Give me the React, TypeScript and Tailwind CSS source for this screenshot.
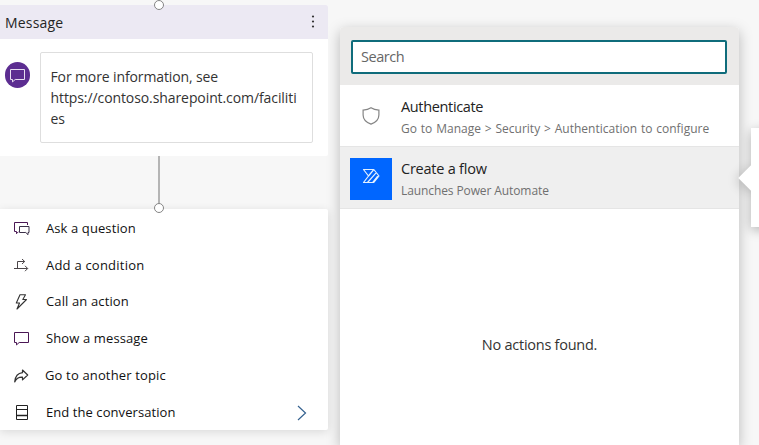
import React from "react";

const AskIcon = () => (
  <svg width="16" height="14" viewBox="0 0 16 14" fill="none" strokeWidth="1">
    <path stroke="#4a1754" d="M13.500 3V.5H.5v9h2v2.200l2-2" />
    <path stroke="#3b3048" d="M5.500 4.500h9.500v6h-1v2.200l-2.200-2.200H5.500z" />
  </svg>
);
const ConditionIcon = () => (
  <svg width="15" height="13" viewBox="0 0 15 13" fill="none" stroke="#4b4549" strokeWidth="1">
    <path d="M0 9.500h13.500M3.500 9.500v-7h7M8 0l2.700 2.500L8 5M11 6.800l2.700 2.700L11 12.200" />
  </svg>
);
const BoltIcon = () => (
  <svg width="13" height="16" viewBox="0 0 13 16" fill="none" stroke="#333" strokeWidth="1.100" strokeLinejoin="round">
    <path d="M5 .7h5.500L7.800 5.500h3.700L2 15l2.500-6H1.300z" />
  </svg>
);
const MessageIcon = ({ color = "#4a1754" }: { color?: string }) => (
  <svg width="16" height="14" viewBox="0 0 16 14" fill="none" stroke={color} strokeWidth="1">
    <path d="M.5.5h14v10H5.200l-2.700 2.400v-2.400h-2z" />
  </svg>
);
const ShareIcon = () => (
  <svg width="15" height="14" viewBox="0 0 15 14" fill="none" stroke="#333" strokeWidth="1.200" strokeLinejoin="round">
    <path d="M8.500 1l5.200 5-5.200 4.900V8.200C4.800 8 2.300 9.600.7 12.900 1.200 7.700 3.800 4.200 8.500 3.700z" />
  </svg>
);
const EndIcon = () => (
  <svg width="12" height="15" viewBox="0 0 12 15" fill="none" stroke="#222" strokeWidth="1">
    <path d="M.5.500h11v14H.500zM.500 4.500h11" />
    <path d="M.500 10.500h11" strokeWidth="1.500" />
  </svg>
);

const items = [
  { label: "Ask a question", Icon: AskIcon, pad: "pl-[14px]", style: "tracking-[0.1px]" },
  { label: "Add a condition", Icon: ConditionIcon, pad: "pl-[14px]", style: "tracking-[0.22px]" },
  { label: "Call an action", Icon: BoltIcon, pad: "pl-[15px]", style: "tracking-[0.13px]" },
  { label: "Show a message", Icon: MessageIcon, pad: "pl-[14px]", style: "tracking-[0.12px]" },
  { label: "Go to another topic", Icon: ShareIcon, pad: "pl-[14px]", style: "tracking-[0.15px] -ml-px" },
  { label: "End the conversation", Icon: EndIcon, pad: "pl-[16px]", style: "tracking-[0.07px]" },
];

const Node = () => <span className="block size-[10px] rounded-full border-[1.5px] border-[#858585] bg-white" />;

export default function App() {
  return (
    <div className="relative flex h-[445px] w-[759px] overflow-hidden bg-[#f7f7f7] font-['Open_Sans','Noto_Sans',sans-serif]">
      <div className="w-[340px] shrink-0 pt-[5px]">
        <section className="relative h-[151px] w-[328px] rounded-r-[2px] bg-white">
          <div className="absolute -top-[5px] left-[154px]"><Node /></div>
          <header className="flex h-[34px] items-center justify-between rounded-tr-[2px] bg-[#ece9f3] pr-[13px] pl-[5px]">
            <h2 className="text-[14px] font-medium tracking-[0.18px] text-[#252525]">Message</h2>
            <svg className="-mt-[2px]" width="4" height="13" viewBox="0 0 4 13" fill="#333"><circle cx="2" cy="1.500" r="1.100" /><circle cx="2" cy="6.500" r="1.100" /><circle cx="2" cy="11.500" r="1.100" /></svg>
          </header>
          <div className="flex pt-[13px] pl-[5px]">
            <div className="mt-[10px] mr-[10px] flex h-[26px] w-[25px] items-center justify-center rounded-full bg-[#5c2d91] pt-px">
              <MessageIcon color="#e7def1" />
            </div>
            <div className="h-[91px] w-[273px] rounded-[2px] border border-[#dedede] pt-[13px] pl-[9.5px] text-[14px] leading-[21px] text-[#333]">
              <p className="tracking-[-0.12px]">For more information, see</p>
              <p className="tracking-[-0.09px]">https://contoso.sharepoint.com/faciliti</p>
              <p className="tracking-[-0.2px]">es</p>
            </div>
          </div>
        </section>
        <div className="ml-[158px] h-[53px] w-[2px] bg-[#b5b5b5]" />
        <section className="relative h-[221px] w-[328px] rounded-r-[2px] bg-white shadow-[0_2px_10px_rgba(0,0,0,0.12)]">
          <div className="absolute -top-[6px] left-[154px]"><Node /></div>
          <ul className="grid auto-rows-[36.8px] pt-[1.2px]">
            {items.map(({ label, Icon, pad, style }, i) => (
              <li key={label} className="flex items-center text-[13px] text-[#111]">
                <span className={`w-[46px] shrink-0 ${pad}`}><Icon /></span>
                <span className={style}>{label}</span>
                {i === 5 && (
                  <svg className="mr-[21px] ml-auto" width="10" height="16" viewBox="0 0 10 16" fill="none" stroke="#34618f" strokeWidth="1.200"><path d="M1 1l7.500 7L1 15" /></svg>
                )}
              </li>
            ))}
          </ul>
        </section>
      </div>

      <section className="mt-[27px] h-[418px] w-[399px] shrink-0 rounded-t-[4px] bg-white shadow-[0_4px_14px_rgba(0,0,0,0.25)]">
        <div className="h-[58px] rounded-t-[4px] bg-[#ebeae9] px-[11px] pt-[13px]">
          <div className="flex h-[34px] w-[376px] items-center rounded-[2px] border-2 border-[#0f6c7b] bg-white pb-px pl-2 text-[14.5px] tracking-[-0.450px] text-[#666]">Search</div>
        </div>
        <div className="flex h-[61px] pl-[10px]">
          <div className="flex w-[42px] items-center justify-center pt-px">
            <svg width="18" height="18" viewBox="0 0 18 18" fill="none" stroke="#858585" strokeWidth="1.200"><path d="M9 .8c2.200 1.500 4.700 2.200 7.900 2.300v4.800c0 4.300-3.200 7.400-7.900 9.200C4.300 15.300 1.100 12.200 1.100 7.900V3.100C4.300 3 6.800 2.300 9 .8z" /></svg>
          </div>
          <div className="pt-[11px] pl-[9px]">
            <p className="text-[14.5px] leading-[22px] tracking-[-0.350px] text-[#222]">Authenticate</p>
            <p className="text-[12px] leading-[21px] text-[#707070] [word-spacing:0.75px]">Go to Manage &gt; Security &gt; Authentication to configure</p>
          </div>
        </div>
        <div className="flex h-[63px] border-y border-[#e5e5e5] bg-[#efefef] pl-[10px]">
          <div className="mt-[11px] flex size-[42px] justify-center bg-[#0066ff] pt-[10px]">
            <svg width="18" height="16" viewBox="0 0 18 16" fill="none" stroke="#e2f0ff" strokeWidth="1.200" strokeLinejoin="round"><path d="M1.500 1.500h10.300L17 8l-5.200 6.500H1.500L6.500 8zM6.500 8l5.300-6.500M5.500 14.500L14.300 4.600M10.500 14.500l5.200-6.500" /></svg>
          </div>
          <div className="pt-[11px] pl-[9px]">
            <p className="text-[14.5px] leading-[22px] tracking-[-0.230px] text-[#222]">Create a flow</p>
            <p className="text-[12px] leading-[21px] tracking-[-0.100px] text-[#707070]">Launches Power Automate</p>
          </div>
        </div>
        <p className="pt-[125px] text-center text-[14.5px] leading-[22px] tracking-[-0.250px] text-[#333]">No actions found.</p>
      </section>

      <div className="absolute top-[128px] left-[751px] h-[99px] w-[20px] rounded-[2px] bg-white shadow-[0_3px_12px_rgba(0,0,0,0.28)]">
        <div className="absolute top-[41px] -left-[9px] size-[18px] rotate-45 bg-white shadow-[0_3px_12px_rgba(0,0,0,0.2)]" />
        <div className="absolute inset-0 bg-white" />
      </div>
    </div>
  );
}
